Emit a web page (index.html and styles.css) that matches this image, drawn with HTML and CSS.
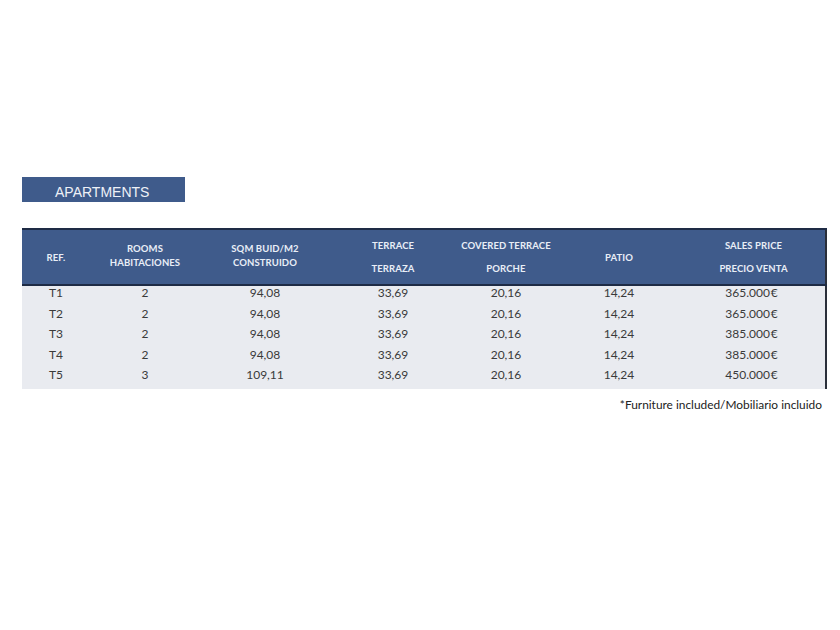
FILE: index.html
```html
<!DOCTYPE html>
<html>
<head>
<meta charset="utf-8">
<link rel="stylesheet" href="styles.css">
</head>
<body>
<div class="page">
  <div class="title">APARTMENTS</div>
  <table class="prices">
    <colgroup>
      <col class="c1"><col class="c2"><col class="c3"><col class="c4"><col class="c5"><col class="c6"><col class="c7">
    </colgroup>
    <thead>
      <tr>
        <th><span class="one">REF.</span></th>
        <th><span class="tight">ROOMS<br>HABITACIONES</span></th>
        <th><span class="tight">SQM BUID/M2<br>CONSTRUIDO</span></th>
        <th><span class="wide">TERRACE<br>TERRAZA</span></th>
        <th><span class="wide">COVERED TERRACE<br>PORCHE</span></th>
        <th><span class="one">PATIO</span></th>
        <th><span class="wide">SALES PRICE<br>PRECIO VENTA</span></th>
      </tr>
    </thead>
    <tbody>
      <tr><td>T1</td><td>2</td><td>94,08</td><td>33,69</td><td>20,16</td><td>14,24</td><td>365.000&#8202;€</td></tr>
      <tr><td>T2</td><td>2</td><td>94,08</td><td>33,69</td><td>20,16</td><td>14,24</td><td>365.000&#8202;€</td></tr>
      <tr><td>T3</td><td>2</td><td>94,08</td><td>33,69</td><td>20,16</td><td>14,24</td><td>385.000&#8202;€</td></tr>
      <tr><td>T4</td><td>2</td><td>94,08</td><td>33,69</td><td>20,16</td><td>14,24</td><td>385.000&#8202;€</td></tr>
      <tr><td>T5</td><td>3</td><td>109,11</td><td>33,69</td><td>20,16</td><td>14,24</td><td>450.000&#8202;€</td></tr>
    </tbody>
  </table>
  <p class="note">*Furniture included/Mobiliario incluido</p>
</div>
</body>
</html>
```

FILE: styles.css
```css
html, body {
  margin: 0;
  padding: 0;
  background: #ffffff;
}
.page {
  padding: 177px 14px 0 22px;
  width: 804px;
}
.title {
  width: 130px;
  height: 25px;
  padding-left: 33px;
  background: #3f5b8b;
  color: #eef1f7;
  font-family: "Liberation Sans", Arial, sans-serif;
  font-size: 14px;
  line-height: 30px;
  box-sizing: content-box;
}
.prices {
  margin-top: 26px;
  width: 804px;
  border-collapse: collapse;
  table-layout: fixed;
  font-family: Lato, "Open Sans", sans-serif;
  border-right: 2px solid #2a2f3a;
}
.c1 { width: 68px; }
.c2 { width: 110px; }
.c3 { width: 130px; }
.c4 { width: 126px; }
.c5 { width: 100px; }
.c6 { width: 126px; }
.c7 { width: 144px; }
.prices thead tr {
  background: #3f5b8b;
  border-top: 2px solid #1e2b45;
  border-bottom: 2px solid #1e2b45;
}
.prices th {
  height: 54px;
  padding: 0;
  color: #e9eef7;
  font-size: 9.5px;
  font-weight: 700;
  text-align: center;
  vertical-align: middle;
  letter-spacing: 0.1px;
}
.prices th .tight {
  display: inline-block;
  line-height: 14px;
  margin-top: -2px;
}
.prices th .wide {
  display: inline-block;
  line-height: 23px;
}
.prices tbody tr {
  background: #e9ebf0;
}
.prices td {
  height: 20.5px;
  padding: 0;
  text-align: center;
  vertical-align: top;
  line-height: 14px;
  font-size: 12px;
  color: #3a3a3a;
}
.prices td:nth-child(7) {
  padding-right: 4px;
}
.note {
  margin: 8px 4px 0 0;
  text-align: right;
  font-family: Lato, "Open Sans", sans-serif;
  font-size: 11.9px;
  color: #222222;
}
```
